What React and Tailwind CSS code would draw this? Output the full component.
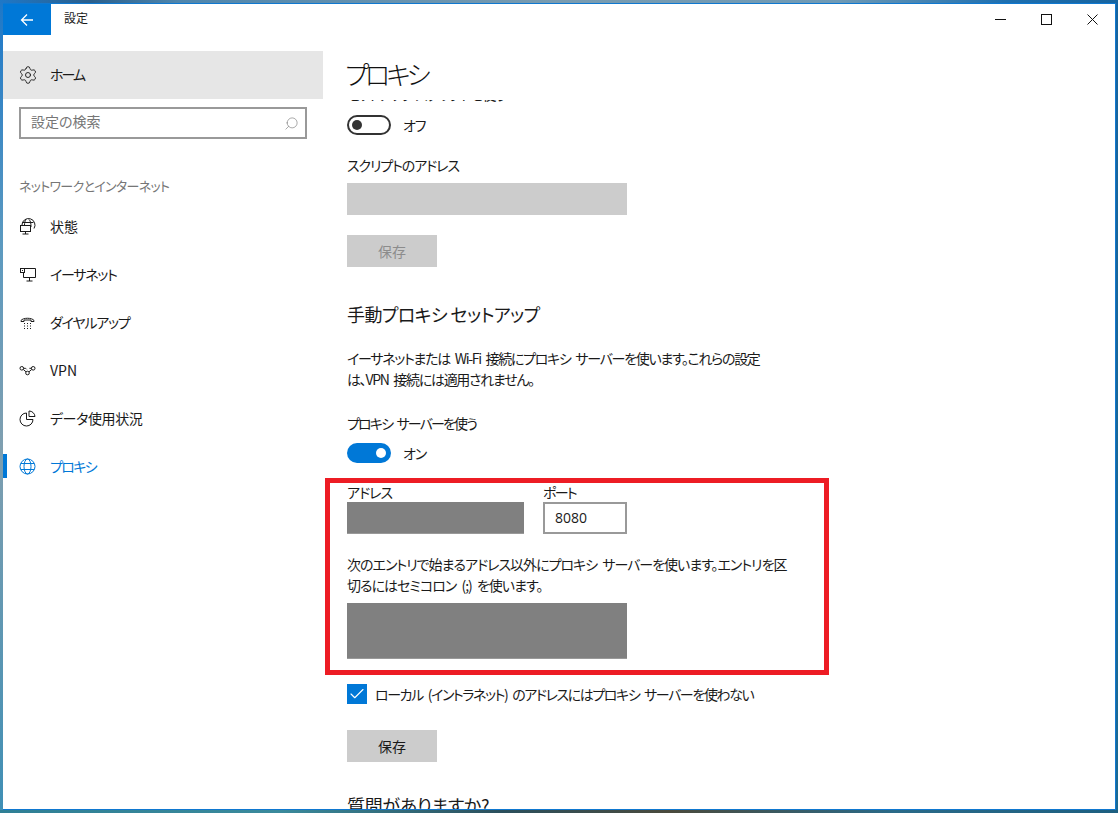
import React from "react";
import { Settings, Search, Check } from "lucide-react";

const jp = { fontFamily: '"Noto Sans CJK JP", "Noto Sans", sans-serif' };

function StatusIcon() {
  return (
    <svg width="17" height="17" viewBox="0 0 17 17" fill="none" stroke="currentColor" strokeWidth="1">
      <path d="M3 7a6.500 6.500 0 1 1 12 3.500" />
      <path d="M7 1.500C5.800 3 5.500 5 5.500 7M10 1.500C11.500 3 12 5 12 9M3.500 4.500H14.500" />
      <rect x="1.500" y="7.500" width="10" height="6" fill="white" />
      <path d="M6.500 13.500v2.500M3.500 16h6" />
    </svg>
  );
}
function EthernetIcon() {
  return (
    <svg width="17" height="17" viewBox="0 0 17 17" fill="none" stroke="currentColor" strokeWidth="1">
      <path d="M5.500 2.500H16.500V11.500H5.500" />
      <rect x="1.500" y="2.500" width="4" height="4" />
      <path d="M4.500 6.500V11.500H6M10.500 11.500v3.500M7.500 15h6M3 4.500h1" />
    </svg>
  );
}
function DialIcon() {
  return (
    <svg width="17" height="17" viewBox="0 0 17 17" fill="none" stroke="currentColor" strokeWidth="1">
      <path d="M2 7.500V6.500C4 3.500 13 3.500 15 6.500V7.500H12V6H5V7.500Z" />
      <path d="M5 10h1M8 10h1M11 10h1M5 12.500h1M8 12.500h1M11 12.500h1M5 15h1M8 15h1M11 15h1" transform="translate(0 -0.500)" />
    </svg>
  );
}
function VpnIcon() {
  return (
    <svg width="17" height="17" viewBox="0 0 17 17" fill="none" stroke="currentColor" strokeWidth="1">
      <circle cx="2.800" cy="6.300" r="1.800" />
      <circle cx="14.200" cy="6.300" r="1.800" />
      <circle cx="8.500" cy="11" r="1.800" />
      <path d="M4.300 7.500L7 9.800M12.700 7.500L10 9.800M4.600 6.300h2l1 1M12.400 6.300h-2" />
    </svg>
  );
}
function PieIcon() {
  return (
    <svg width="17" height="17" viewBox="0 0 17 17" fill="none" stroke="currentColor" strokeWidth="1">
      <path d="M7.500 3a6.500 6.500 0 1 0 6.500 6.500H7.500Z" />
      <path d="M10 1v5.500H16A6 6 0 0 0 10 1Z" />
    </svg>
  );
}
function GlobeIcon() {
  return (
    <svg width="17" height="17" viewBox="0 0 17 17" fill="none" stroke="currentColor" strokeWidth="1">
      <circle cx="8.500" cy="8.500" r="7.500" />
      <ellipse cx="8.500" cy="8.500" rx="3.500" ry="7.500" />
      <path d="M1.800 5.500H15.200M1.800 11.500H15.200" />
    </svg>
  );
}
function BackArrow() {
  return (
    <svg width="14" height="14" viewBox="0 0 14 14" fill="none" stroke="currentColor" strokeWidth="1.300">
      <path d="M13 7H1.500M7 1.500L1.500 7L7 12.500" />
    </svg>
  );
}

function NavItem({ icon, label, active, labelClass }) {
  return (
    <div className={`relative flex h-12 items-center pl-4 text-sm ${active ? "text-[#0078d7]" : "text-[#1a1a1a]"}`}>
      {active && <span className="absolute left-0 top-[12px] h-6 w-1 bg-[#0078d7]" />}
      <span className="flex w-[31px] items-center">{icon}</span>
      <span className={labelClass}>{label}</span>
    </div>
  );
}

function Toggle({ on }) {
  return on ? (
    <span className="flex h-5 w-11 items-center justify-end rounded-full bg-[#0078d7] pr-[5px]">
      <span className="h-[10px] w-[10px] rounded-full bg-white" />
    </span>
  ) : (
    <span className="flex h-5 w-11 items-center rounded-full border-2 border-[#333333] pl-[3px]">
      <span className="h-[10px] w-[10px] rounded-full bg-[#333333]" />
    </span>
  );
}

export default function App() {
  return (
    <div
      className="flex h-[813px] w-[1118px] flex-col overflow-hidden bg-[#4a86a8] [font-feature-settings:'palt']"
      style={jp}
    >
      <div className="h-[3px] shrink-0 bg-[linear-gradient(90deg,#1e78c8_0%,#2a5f8c_8%,#4f86ad_16%,#7a9cb0_50%,#6f9ab5_75%,#1d6fb0_90%,#17649f_100%)]" />
      <div className="flex h-[807px] shrink-0">
        <div className="w-[3px] shrink-0 bg-[linear-gradient(180deg,#1e78c8_0%,#5c9ac0_30%,#7f9fb0_55%,#3f8fb5_100%)]" />
        <div className="flex w-[1113px] flex-col overflow-hidden border border-l-0 border-[#0f78d0] bg-white">
          <div className="flex h-[31px] shrink-0 items-start">
            <div className="flex h-[31px] w-12 items-center justify-center bg-[#0078d7] text-white">
              <BackArrow />
            </div>
            <span className="ml-[13px] mt-[5px] text-xs leading-[18px] text-[#1a1a1a]">設定</span>
            <div className="ml-auto flex text-[#111111]">
              <span className="flex h-[31px] w-[46px] items-center justify-center">
                <svg width="11" height="11" viewBox="0 0 11 11" stroke="currentColor" fill="none" shapeRendering="crispEdges"><path d="M0 5.500H11" /></svg>
              </span>
              <span className="flex h-[31px] w-[46px] items-center justify-center">
                <svg width="11" height="11" viewBox="0 0 11 11" stroke="currentColor" fill="none" shapeRendering="crispEdges"><rect x="0.500" y="0.500" width="10" height="10" /></svg>
              </span>
              <span className="flex h-[31px] w-[46px] items-center justify-center">
                <svg width="11" height="11" viewBox="0 0 11 11" stroke="currentColor" fill="none"><path d="M0.500 0.500L10.500 10.500M10.500 0.500L0.500 10.500" /></svg>
              </span>
            </div>
          </div>

          <div className="flex min-h-0 flex-1">
            <aside className="w-80 shrink-0 pt-4">
              <div className="flex h-12 items-center bg-[#e6e6e6] pl-4 text-sm text-[#1a1a1a]">
                <span className="-ml-[1px] flex w-[32px] items-center"><Settings size={20} strokeWidth={1.100} /></span>
                <span className="-mt-[2px] tracking-[-2px]">ホーム</span>
              </div>
              <div className="mx-4 mt-2 flex h-8 w-[288px] items-center justify-between border-2 border-[#999999] pl-[10px] pr-[6px] text-sm text-[#767676]">
                <span className="-mt-[4px]">設定の検索</span>
                <Search size={15} strokeWidth={1} className="-scale-x-100" />
              </div>
              <div className="mt-[37px] h-[32px] pl-4 text-[13px] leading-[20px] tracking-[-0.7px] text-[#767676]">ネットワークとインターネット</div>
              <div className="-mt-[6px]">
                <NavItem icon={<StatusIcon />} label="状態" />
                <NavItem icon={<EthernetIcon />} label="イーサネット" labelClass="tracking-[-1.3px]" />
                <NavItem icon={<DialIcon />} label="ダイヤルアップ" labelClass="tracking-[-1.2px]" />
                <NavItem icon={<VpnIcon />} label="VPN" />
                <NavItem icon={<PieIcon />} label="データ使用状況" labelClass="tracking-[-0.4px]" />
                <NavItem icon={<GlobeIcon />} label="プロキシ" active labelClass="tracking-[-1.7px]" />
              </div>
            </aside>

            <main className="relative min-w-0 flex-1 pl-6">
              <h1 className="-ml-[2px] h-[65px] pt-[19px] text-[26px] leading-[40px] font-light tracking-[-4px] text-[#111111]">プロキシ</h1>
              <div className="relative h-[711px] overflow-hidden text-sm text-[#1a1a1a]">
                <div className="-mt-[16px] h-[20px] leading-5 tracking-[-1px]">セットアップ スクリプトを使う</div>
                <div className="mt-[11px] flex items-center gap-3 leading-5">
                  <Toggle />
                  <span className="tracking-[-1px]">オフ</span>
                </div>
                <div className="mt-[20px] h-5 leading-5 tracking-[-1.1px]">スクリプトのアドレス</div>
                <div className="mt-[8px] h-8 w-[280px] bg-[#cccccc]" />
                <div className="mt-5 flex h-8 w-[90px] items-center justify-center bg-[#cccccc] text-[#8c8c8c]">保存</div>
                <h2 className="mt-[35px] h-[24px] text-lg leading-6 font-normal tracking-[-0.6px]">手動プロキシ セットアップ</h2>
                <p className="mt-[22px] w-[442px] leading-[21px] tracking-[-1.3px] [word-spacing:3px]">
                  イーサネットまたは Wi-Fi 接続にプロキシ サーバーを使います。これらの設定
                  <br />
                  は、VPN 接続には適用されません。
                </p>
                <div className="mt-[23px] h-5 leading-5 tracking-[-1.85px] [word-spacing:3px]">プロキシ サーバーを使う</div>
                <div className="mt-[10px] flex items-center gap-3 leading-5">
                  <Toggle on />
                  <span className="tracking-[-1px]">オン</span>
                </div>
                <div className="mt-[19px] flex">
                  <div className="w-[196px]">
                    <div className="h-[20px] leading-5 tracking-[-1px]">アドレス</div>
                    <div className="-ml-[1px] h-8 w-[178px] border-b border-[#999999] bg-[#808080]" />
                  </div>
                  <div>
                    <div className="h-[20px] leading-5 tracking-[-1.7px]">ポート</div>
                    <div className="flex h-8 w-[84px] items-center border-2 border-[#999999] pl-[10px] leading-none" style={{ fontFamily: '"Open Sans", sans-serif' }}>8080</div>
                  </div>
                </div>
                <p className="mt-[20px] w-[442px] leading-[21px] tracking-[-1px] [word-spacing:3px]">次のエントリで始まるアドレス以外にプロキシ サーバーを使います。エントリを区切るにはセミコロン (;) を使います。</p>
                <div className="mt-[7px] h-14 w-[280px] border-b border-[#999999] bg-[#808080]" />
                <div className="mt-[25px] flex items-center gap-[8px] leading-5">
                  <span className="flex h-5 w-5 items-center justify-center bg-[#0078d7] text-white"><Check size={18} strokeWidth={1.500} /></span>
                  <span className="tracking-[-1.4px] [word-spacing:3px]">ローカル (イントラネット) のアドレスにはプロキシ サーバーを使わない</span>
                </div>
                <div className="mt-[26px] flex h-8 w-[90px] items-center justify-center bg-[#cccccc]">保存</div>
                <h2 className="mt-[31px] h-[24px] text-lg leading-6 font-normal tracking-[-0.3px]">質問がありますか?</h2>
              </div>
              <div className="absolute left-[2px] top-[443px] h-[197px] w-[504px] border-[5px] border-[#ed1c24]" />
            </main>
          </div>
        </div>
        <div className="w-[2px] shrink-0 bg-[linear-gradient(180deg,#17649f_0%,#1b6a94_100%)]" />
      </div>
      <div className="h-[3px] shrink-0 bg-[linear-gradient(90deg,#2f7f95_0%,#3a8a9c_25%,#2b4f5c_45%,#4a4a3c_60%,#2a6a88_80%,#1d5f80_100%)]" />
    </div>
  );
}
